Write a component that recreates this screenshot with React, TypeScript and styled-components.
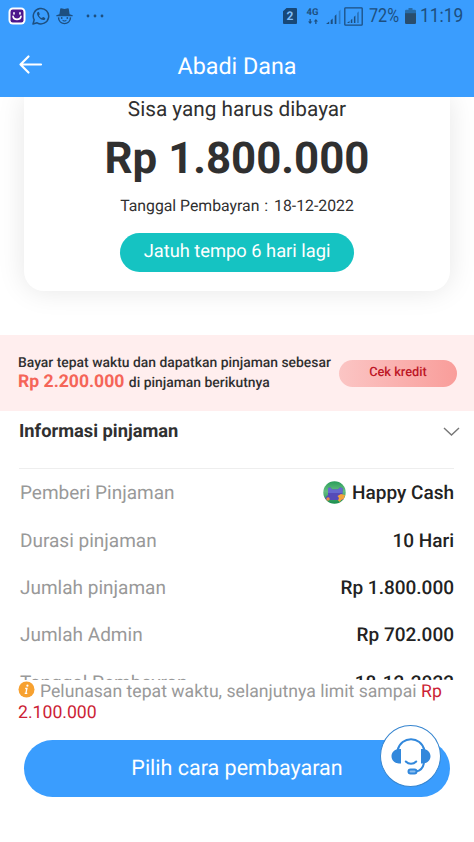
import React from "react";
import styled, { createGlobalStyle } from "styled-components";

const GlobalStyle = createGlobalStyle`
  *, *::before, *::after { box-sizing: border-box; }
  body { margin: 0; background: #fff; font-family: Roboto, "Liberation Sans", sans-serif; color: #303030; text-rendering: geometricPrecision; }
  button { font: inherit; border: 0; padding: 0; cursor: pointer; text-rendering: inherit; }
`;

const Screen = styled.div`
  width: 474px;
  height: 842px;
  display: flex;
  flex-direction: column;
  overflow: hidden;
  background: #fff;
`;

const Header = styled.header`
  flex: none;
  height: 97px;
  background: #3a9dfe;
`;

const StatusBar = styled.div`
  height: 32px;
  padding: 0 11px 0 8px;
  display: flex;
  align-items: center;
  justify-content: space-between;
  color: #1d4f80;
`;

const StatusGroup = styled.div<{ $gap: number; $indent?: number }>`
  display: flex;
  align-items: center;
  gap: ${(p) => p.$gap}px;
  margin-left: ${(p) => p.$indent ?? 0}px;
  svg { display: block; flex: none; }
`;

const SimBadge = styled.span`
  width: 14px;
  height: 16px;
  margin-right: 7px;
  border-radius: 1px;
  clip-path: polygon(25% 0, 100% 0, 100% 100%, 0 100%, 0 20%);
  background: #174878;
  color: #80bdf7;
  font: 700 12px/16px Roboto, sans-serif;
  text-align: center;
`;

const Network = styled.span`
  width: 13px;
  display: flex;
  flex-direction: column;
  align-items: center;
  gap: 2px;
  margin-right: 5px;
  font: 700 9.5px/8px Roboto, sans-serif;
`;

const StatusText = styled.span<{ $width: number; $scale: number }>`
  width: ${(p) => p.$width}px;
  font-size: 19.5px;
  line-height: 24px;
  white-space: nowrap;
  transform: scaleX(${(p) => p.$scale});
  transform-origin: left;
`;

const TitleBar = styled.div`
  height: 65px;
  padding: 0 18px;
  display: grid;
  grid-template-columns: 26px 1fr 26px;
  align-items: center;
`;

const BackButton = styled.button`
  display: flex;
  background: none;
  color: #fff;
`;

const Title = styled.h1`
  margin: 2px 0 0;
  text-align: center;
  font-size: 23.3px;
  line-height: 28px;
  font-weight: 400;
  color: #fff;
`;

const Content = styled.main`
  flex: none;
  height: 583px;
  overflow: hidden;
`;

const BalanceCard = styled.section`
  height: 194px;
  margin: 0 24px 44px;
  padding-top: 1px;
  display: flex;
  flex-direction: column;
  align-items: center;
  border-radius: 0 0 20px 20px;
  background: #fff;
  box-shadow: 0 0 28px rgba(0, 0, 0, 0.1);
  white-space: nowrap;
`;

const CardLabel = styled.div`
  font-size: 20.75px;
  line-height: 24px;
`;

const Amount = styled.div`
  margin-top: 11px;
  font-size: 43.8px;
  line-height: 50px;
  font-weight: 700;
`;

const DueDate = styled.div`
  margin-top: 13px;
  font-size: 15.8px;
  line-height: 20px;
`;

const Colon = styled.span`
  margin: 0 2px 0 1px;
`;

const DuePill = styled.div`
  width: 234px;
  height: 39px;
  margin-top: 17px;
  border-radius: 20px;
  background: #15c3c2;
  color: #fff;
  font-size: 18.3px;
  line-height: 38px;
  text-align: center;
`;

const Promo = styled.section`
  height: 76px;
  padding: 0 17px 0 18px;
  display: flex;
  align-items: center;
  justify-content: space-between;
  background: #ffeeee;
`;

const PromoText = styled.p`
  margin: 1px 0 0;
  font-size: 13.9px;
  line-height: 19px;
  font-weight: 500;
  white-space: nowrap;
`;

const PromoAmount = styled.span`
  margin-right: 1px;
  color: #f56558;
  font-size: 17.6px;
  font-weight: 700;
`;

const CreditButton = styled.button`
  width: 118px;
  height: 27px;
  padding-bottom: 2px;
  border-radius: 14px;
  background: linear-gradient(90deg, #fbc5c4, #f99d9a);
  color: #bd1726;
  font-size: 12.8px;
  font-weight: 500;
`;

const LoanInfo = styled.section`
  padding: 0 20px 0 19px;
`;

const LoanHeading = styled.div`
  height: 58px;
  padding: 0 0 15px;
  display: flex;
  align-items: center;
  justify-content: space-between;
  border-bottom: 1px solid #eee;
  svg { margin-right: -6px; }
`;

const Heading = styled.h2`
  margin: 0;
  font-size: 18.3px;
  line-height: 24px;
  font-weight: 700;
`;

const Row = styled.div`
  height: 47.4px;
  padding-left: 1px;
  display: flex;
  align-items: center;
  justify-content: space-between;
  font-size: 19px;
`;

const RowLabel = styled.span`
  color: #999;
`;

const RowValue = styled.span`
  display: flex;
  align-items: center;
  gap: 6px;
  font-weight: 500;
  color: #222;
`;

const Footer = styled.footer`
  flex: 1;
  padding: 1px 18px 0;
`;

const Notice = styled.p`
  margin: 0;
  font-size: 17.65px;
  line-height: 20.5px;
  color: #999;
  white-space: nowrap;
  svg { margin-right: 5px; vertical-align: -1px; }
`;

const Highlight = styled.span`
  color: #cc1f36;
`;

const PayArea = styled.div`
  position: relative;
  margin: 16.5px 6px 0;
`;

const PayButton = styled.button`
  display: block;
  width: 426px;
  height: 57px;
  border-radius: 29px;
  background: #3a9dfe;
  color: #fff;
  font-size: 21.5px;
`;

const SupportButton = styled.button`
  position: absolute;
  top: -15px;
  right: 9px;
  width: 61px;
  height: 62px;
  display: flex;
  align-items: center;
  justify-content: center;
  border: 1px solid #3685cf;
  border-radius: 50%;
  background: #fff;
`;

const FaceAppIcon = () => (
  <svg width="18" height="18" viewBox="0 0 18 18">
    <rect x=".5" y=".5" width="17" height="17" rx="4.5" fill="#fff" />
    <rect x="2.5" y="2.5" width="13" height="13" rx="2.2" fill="#4c168c" />
    <path d="M5 9.200c.4 4.200 7.600 4.200 8 0M6 5.700v1.200M12 5.700v1.200" fill="none" stroke="#fff" strokeWidth="1.600" strokeLinecap="round" />
  </svg>
);

const WhatsAppIcon = () => (
  <svg width="18" height="18" viewBox="0 0 18 18" fill="none">
    <path d="M1 17l1.200-4.200A7.700 7.700 0 1 1 5.100 15.800z" stroke="currentColor" strokeWidth="1.500" strokeLinejoin="round" />
    <path d="M6.500 4.700c-.8 0-1.500.8-1.500 1.900 0 2.900 3.700 6.500 6.300 6.500 1.200 0 2-.8 2-1.700 0-.4-.2-.5-2.100-1.400-.5-.2-.8.900-1.300 1.100-1.100-.2-2.600-1.700-2.900-2.700.2-.5.900-.8.700-1.400-.6-1.600-.7-2.100-1.200-2.300z" fill="currentColor" />
  </svg>
);

const IncognitoIcon = () => (
  <svg width="17" height="17" viewBox="0 0 17 17">
    <path d="M4.200 1Q4.300.3 5 .3l3.500.7L12 .3q.7 0 .8.700l.8 5.200 3.100 1.100v.9H.3v-.9l3.100-1.100z" fill="currentColor" />
    <path d="M2.500 9.400c.3 8.300 11.700 8.300 12 0" fill="none" stroke="currentColor" strokeWidth="1.400" />
    <circle cx="5.700" cy="10" r=".9" fill="currentColor" /><circle cx="11.300" cy="10" r=".9" fill="currentColor" />
    <path d="M6.200 11.800l2.300.6 2.300-.6c-.4 2.400-4.200 2.400-4.600 0z" fill="currentColor" />
  </svg>
);

const MoreIcon = () => (
  <svg width="18" height="4" viewBox="0 0 18 4" fill="currentColor">
    <circle cx="2" cy="2" r="1.400" /><circle cx="9" cy="2" r="1.400" /><circle cx="16" cy="2" r="1.400" />
  </svg>
);

const DataArrows = () => (
  <svg width="10" height="5" viewBox="0 0 10 5" fill="currentColor">
    <path d="M0 2.500h1.500V0h1.300v2.500h1.500L2.100 5zM5.700 2.500L7.900 0l2.100 2.500H8.500V5H7.200V2.500z" />
  </svg>
);

const SignalIcon = () => (
  <svg width="16" height="16" viewBox="0 0 16 16">
    <path d="M0 16l3.200-2.500V16zM4.700 12.200l2-1.700V16h-2zM8.700 8l1.700-1.700V16H8.700z" fill="currentColor" />
    <path d="M12.800 3.500l1.700-2V16h-1.700z" fill="currentColor" opacity=".45" />
  </svg>
);

const BoxedSignalIcon = () => (
  <svg width="19" height="19" viewBox="0 0 19 19">
    <rect x=".8" y=".8" width="17.400" height="17.400" rx=".8" fill="none" stroke="currentColor" strokeWidth="1.300" />
    <path d="M3 16l2.500-2v2zM6.800 13l1.500-1.300V16H6.800zM9.900 10l1.500-1.400V16H9.900z" fill="currentColor" />
    <path d="M13.200 6l1.500-1.800V16h-1.500z" fill="currentColor" opacity=".6" />
  </svg>
);

const BatteryIcon = () => (
  <svg width="11" height="16" viewBox="0 0 11 16">
    <path d="M3.500 0h4v1.700h2.200q1.300 0 1.300 1.300v3H0V3q0-1.300 1.300-1.300h2.200z" fill="#276ca9" />
    <path d="M0 5.300h11v9.400q0 1.300-1.300 1.300H1.300Q0 16 0 14.700z" fill="#294d6d" />
  </svg>
);

const BackIcon = () => (
  <svg width="26" height="22" viewBox="0 0 26 22" fill="none" stroke="currentColor" strokeWidth="2.200" strokeLinecap="round" strokeLinejoin="round">
    <path d="M23 10.500H2.500M10.500 2.500l-8 8 8 8" />
  </svg>
);

const ChevronIcon = () => (
  <svg width="18" height="12" viewBox="0 0 18 12" fill="none" stroke="#777" strokeWidth="1.400">
    <path d="M2 2l7.500 7L17 2" />
  </svg>
);

const HappyCashLogo = () => (
  <svg width="23" height="23" viewBox="0 0 23 23">
    <defs>
      <linearGradient id="lender-green" x2="0" y2="1">
        <stop stopColor="#279d59" /><stop offset=".45" stopColor="#65bd80" /><stop offset="1" stopColor="#198d4d" />
      </linearGradient>
      <clipPath id="lender-circle"><circle cx="11.500" cy="11.500" r="11.200" /></clipPath>
    </defs>
    <g clipPath="url(#lender-circle)">
      <path d="M0 0h23v23H0z" fill="url(#lender-green)" />
      <path d="M5 7l2.500-.5L9 8.500h6L17 6.500l2.500.5v8l1.500 1v3H5c-3 0-3.500-2-2-3l2-2z" fill="#554bb8" />
      <path d="M5 7l2.500-.5L9 8.500h6L17 6.500l2.500.5v5H5z" fill="#6669cf" />
      <circle cx="5" cy="18" r="1.700" fill="#e78d42" />
      <path d="M14.500 15l3.500-2 4 1-1 4-3 1-1 2-2-1.500 1-2.500z" fill="#f5a43b" />
    </g>
  </svg>
);

const InfoIcon = () => (
  <svg width="17" height="17" viewBox="0 0 17 17">
    <circle cx="8.500" cy="8.500" r="8" fill="#f7a130" />
    <circle cx="9.400" cy="4.700" r="1.100" fill="#fff" />
    <path d="M7.200 7.500h1.700l-1 4.900h1.400M6.700 12.400h1.200" fill="none" stroke="#fff" strokeWidth="1.300" />
  </svg>
);

const HeadsetIcon = () => (
  <svg width="42" height="38" viewBox="0 0 42 38" fill="none" stroke="#3288dc" strokeWidth="2">
    <path d="M7.500 13.500C11-1.500 31-1.500 34.500 13.500" />
    <path d="M11 12v14.500H9C-1 26 -1 12.500 9 12zM31 12v14.500h2c10-.5 10-14 0-14.500z" fill="#3288dc" stroke="none" />
    <path d="M15.800 24.500c3 3 7.400 3 10.400 0" strokeLinecap="round" />
    <path d="M34 26c-1 5-3.500 7.800-8 8.500" />
    <rect x="18.500" y="32.500" width="8" height="4" rx="2" fill="#8abef0" />
  </svg>
);

const loanRows = [
  { label: "Pemberi Pinjaman", value: "Happy Cash", logo: true },
  { label: "Durasi pinjaman", value: "10 Hari" },
  { label: "Jumlah pinjaman", value: "Rp 1.800.000" },
  { label: "Jumlah Admin", value: "Rp 702.000" },
  { label: "Tanggal Pembayran", value: "18-12-2022" },
];

export default function App() {
  return (
    <>
      <GlobalStyle />
      <Screen>
        <Header>
          <StatusBar>
            <StatusGroup $gap={6}>
              <FaceAppIcon />
              <WhatsAppIcon />
              <IncognitoIcon />
              <StatusGroup $gap={0} $indent={7}><MoreIcon /></StatusGroup>
            </StatusGroup>
            <StatusGroup $gap={2}>
              <SimBadge>2</SimBadge>
              <Network>4G<DataArrows /></Network>
              <SignalIcon />
              <BoxedSignalIcon />
              <StatusGroup $gap={4} $indent={4}>
                <StatusText $width={32} $scale={0.83}>72%</StatusText>
                <BatteryIcon />
                <StatusText $width={43} $scale={0.89}>11:19</StatusText>
              </StatusGroup>
            </StatusGroup>
          </StatusBar>
          <TitleBar>
            <BackButton aria-label="Kembali"><BackIcon /></BackButton>
            <Title>Abadi Dana</Title>
          </TitleBar>
        </Header>
        <Content>
          <BalanceCard>
            <CardLabel>Sisa yang harus dibayar</CardLabel>
            <Amount>Rp 1.800.000</Amount>
            <DueDate>Tanggal Pembayran <Colon>:</Colon> 18-12-2022</DueDate>
            <DuePill>Jatuh tempo 6 hari lagi</DuePill>
          </BalanceCard>
          <Promo>
            <PromoText>
              Bayar tepat waktu dan dapatkan pinjaman sebesar<br />
              <PromoAmount>Rp 2.200.000</PromoAmount> di pinjaman berikutnya
            </PromoText>
            <CreditButton>Cek kredit</CreditButton>
          </Promo>
          <LoanInfo>
            <LoanHeading>
              <Heading>Informasi pinjaman</Heading>
              <ChevronIcon />
            </LoanHeading>
            {loanRows.map((row) => (
              <Row key={row.label}>
                <RowLabel>{row.label}</RowLabel>
                <RowValue>{row.logo && <HappyCashLogo />}{row.value}</RowValue>
              </Row>
            ))}
          </LoanInfo>
        </Content>
        <Footer>
          <Notice>
            <InfoIcon />Pelunasan tepat waktu, selanjutnya limit sampai <Highlight>Rp<br />2.100.000</Highlight>
          </Notice>
          <PayArea>
            <PayButton>Pilih cara pembayaran</PayButton>
            <SupportButton aria-label="Layanan pelanggan"><HeadsetIcon /></SupportButton>
          </PayArea>
        </Footer>
      </Screen>
    </>
  );
}
